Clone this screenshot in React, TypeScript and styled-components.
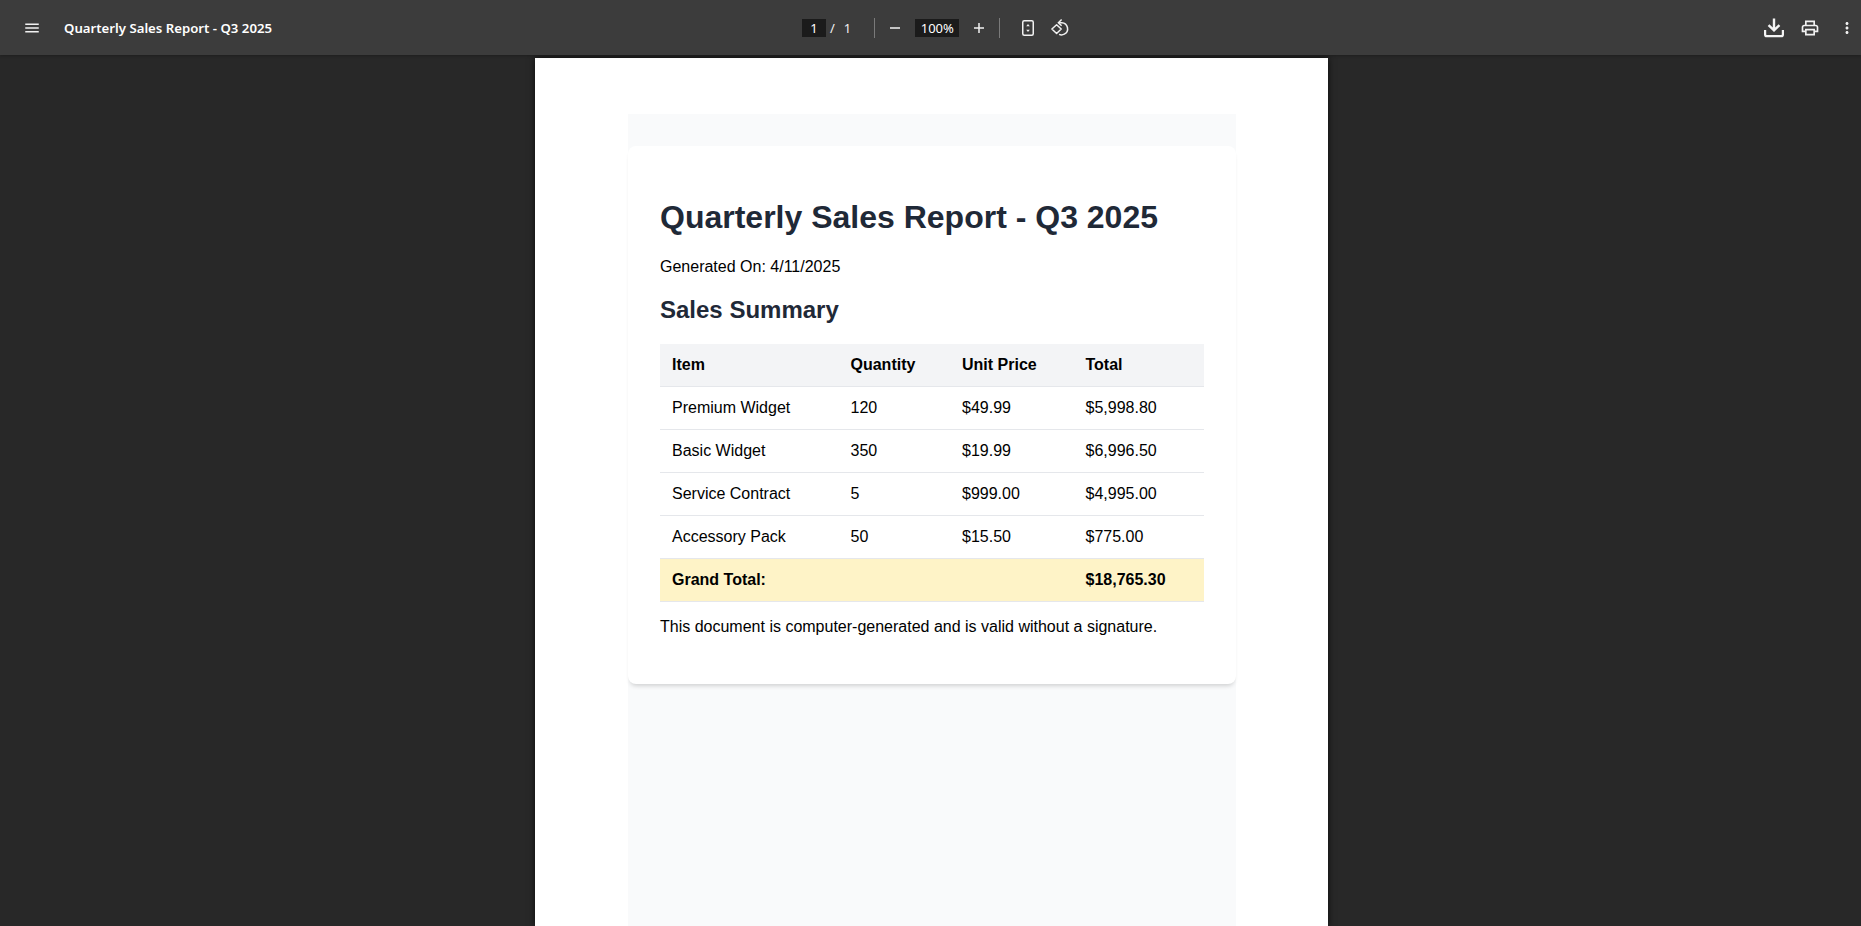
import React from "react";
import styled, { createGlobalStyle } from "styled-components";

const GlobalStyle = createGlobalStyle`
  html, body {
    margin: 0;
    padding: 0;
    height: 100%;
    overflow: hidden;
    background: #282828;
  }
`;

const Viewer = styled.div`
  width: 100%;
  height: 926px;
  display: flex;
  flex-direction: column;
  overflow: hidden;
  background: #282828;
  font-family: "Noto Sans", "Open Sans", sans-serif;
`;

const Toolbar = styled.header`
  flex: none;
  height: 55px;
  display: grid;
  grid-template-columns: 802px auto 1fr;
  align-items: center;
  background: #3c3c3c;
  color: #fff;
  position: relative;
  z-index: 2;
  box-shadow: 0 1px 3px rgba(0, 0, 0, 0.25);
`;

const LeftGroup = styled.div`
  display: flex;
  align-items: center;
  padding-left: 22px;
`;

const CenterGroup = styled.div`
  display: flex;
  align-items: center;
`;

const RightGroup = styled.div`
  display: flex;
  align-items: center;
  justify-content: flex-end;
  padding-right: 5.5px;
`;

const IconSlot = styled.span<{ $w?: number; $ml?: number }>`
  width: ${(p) => p.$w ?? 20}px;
  height: 24px;
  margin-left: ${(p) => p.$ml ?? 0}px;
  display: flex;
  align-items: center;
  justify-content: center;
  flex: none;
`;

const DocTitle = styled.span`
  margin-left: 22px;
  font-size: 13.2px;
  font-weight: 600;
  color: #fff;
  white-space: nowrap;
`;

const NumberBox = styled.span<{ $w: number; $ml?: number }>`
  width: ${(p) => p.$w}px;
  height: 18px;
  margin-left: ${(p) => p.$ml ?? 0}px;
  background: #1b1b1b;
  color: #fff;
  font-size: 13px;
  line-height: 19px;
  text-align: center;
  flex: none;
`;

const PageText = styled.span<{ $ml: number }>`
  margin-left: ${(p) => p.$ml}px;
  font-size: 13px;
  color: #f1f1f1;
`;

const Separator = styled.span<{ $ml: number }>`
  width: 1px;
  height: 20px;
  margin-left: ${(p) => p.$ml}px;
  background: #7a7a7a;
  flex: none;
`;

const Stage = styled.main`
  flex: 1;
  padding-top: 3px;
  min-height: 0;
`;

const Sheet = styled.div`
  width: 793px;
  height: 868px;
  margin: 0 0 0 535px;
  padding: 56px 92px 0 93px;
  box-sizing: border-box;
  background: #fff;
  box-shadow: 0 0 7px rgba(0, 0, 0, 0.75);
`;

const DocBody = styled.div`
  height: 100%;
  padding-top: 32px;
  box-sizing: border-box;
  background: #f9fafb;
  font-family: "Liberation Sans", Arial, sans-serif;
  font-size: 16px;
  color: #000;
`;

const Card = styled.section`
  padding: 32px;
  background: #fff;
  border-radius: 8px;
  box-shadow: 0 4px 4px -2px rgba(0, 0, 0, 0.16);
`;

const Title = styled.h1`
  margin: 21.44px 0;
  font-size: 32px;
  font-weight: 700;
  color: #1f2937;
`;

const Paragraph = styled.p`
  margin: 16px 0;
`;

const Subtitle = styled.h2`
  margin: 19.92px 0;
  font-size: 24px;
  font-weight: 700;
  color: #1f2937;
`;

const Table = styled.table`
  width: 544px;
  table-layout: fixed;
  border-collapse: collapse;
`;

const HeadCell = styled.th`
  padding: 12px;
  background: #f3f4f6;
  border-bottom: 1px solid #e5e7eb;
  font-weight: 700;
  text-align: left;
`;

const Cell = styled.td`
  padding: 12px;
  border-bottom: 1px solid #e5e7eb;
  text-align: left;
`;

const TotalCell = styled(Cell)`
  background: #fef3c7;
  font-weight: 700;
`;

const ItemCol = styled.col`
  width: 178.5px;
`;
const QuantityCol = styled.col`
  width: 111.5px;
`;
const PriceCol = styled.col`
  width: 123.5px;
`;
const TotalCol = styled.col`
  width: 130.5px;
`;

const rows = [
  ["Premium Widget", "120", "$49.99", "$5,998.80"],
  ["Basic Widget", "350", "$19.99", "$6,996.50"],
  ["Service Contract", "5", "$999.00", "$4,995.00"],
  ["Accessory Pack", "50", "$15.50", "$775.00"],
];

function MenuIcon() {
  return (
    <svg width="18" height="18" viewBox="0 0 24 24" fill="#f1f1f1">
      <path d="M3 18h18v-2H3v2zm0-5h18v-2H3v2zm0-7v2h18V6H3z" />
    </svg>
  );
}

function MinusIcon() {
  return (
    <svg width="12" height="12" viewBox="0 0 12 12" fill="#f1f1f1">
      <rect x="1" y="5.25" width="10" height="1.5" />
    </svg>
  );
}

function PlusIcon() {
  return (
    <svg width="12" height="12" viewBox="0 0 12 12" fill="#f1f1f1">
      <path d="M1 5.25h4.25V1h1.5v4.25H11v1.5H6.75V11h-1.5V6.75H1z" />
    </svg>
  );
}

function FitIcon() {
  return (
    <svg width="16" height="20" viewBox="0 0 16 20" fill="none">
      <rect x="2.75" y="2.75" width="10.5" height="14.5" rx="1.5" stroke="#f1f1f1" strokeWidth="1.5" />
      <path d="M8 6l1.8 2.2H6.2zM8 14l-1.8-2.2h3.6z" fill="#f1f1f1" />
    </svg>
  );
}

function RotateIcon() {
  return (
    <svg width="20" height="20" viewBox="0 0 20 20" fill="none" stroke="#f1f1f1" strokeWidth="1.5">
      <path d="M6.6 6.7 1.9 11l4.7 4.5 4.6-4.5z" strokeLinejoin="round" />
      <path d="M8.6 4.7h3.2a6.1 6.1 0 0 1 2.5 11.5 6 6 0 0 1-5.2.2" />
      <path d="M11.6 1.5 8.4 4.7l3.2 3.1" />
    </svg>
  );
}

function DownloadIcon() {
  return (
    <svg width="22" height="22" viewBox="0 0 22 22" fill="#f4f4f4">
      <path d="M9.8 1.5h2.4v9l3.4-3.3L17.3 9 11 15.1 4.7 9l1.7-1.8 3.4 3.3z" />
      <path d="M1 13h2.2v4.2c0 .6.3.9.9.9h13.8c.6 0 .9-.3.9-.9V13H21v4.7c0 1.6-1.1 2.6-2.6 2.6H3.6c-1.5 0-2.6-1-2.6-2.6z" />
    </svg>
  );
}

function PrintIcon() {
  return (
    <svg width="20" height="20" viewBox="0 0 24 24" fill="#f1f1f1">
      <path d="M19 8h-1V3H6v5H5c-1.66 0-3 1.34-3 3v6h4v4h12v-4h4v-6c0-1.66-1.34-3-3-3zM8 5h8v3H8V5zm8 12v2H8v-4h8v2zm2-2v-2H6v2H4v-4c0-.55.45-1 1-1h14c.55 0 1 .45 1 1v4h-2z" />
    </svg>
  );
}

function MoreIcon() {
  return (
    <svg width="18" height="18" viewBox="0 0 24 24" fill="#f1f1f1">
      <path d="M12 8c1.1 0 2-.9 2-2s-.9-2-2-2-2 .9-2 2 .9 2 2 2zm0 2c-1.1 0-2 .9-2 2s.9 2 2 2 2-.9 2-2-.9-2-2-2zm0 6c-1.1 0-2 .9-2 2s.9 2 2 2 2-.9 2-2-.9-2-2-2z" />
    </svg>
  );
}

export default function App() {
  return (
    <Viewer>
      <GlobalStyle />
      <Toolbar>
        <LeftGroup>
          <IconSlot $w={20}>
            <MenuIcon />
          </IconSlot>
          <DocTitle>Quarterly Sales Report - Q3 2025</DocTitle>
        </LeftGroup>
        <CenterGroup>
          <NumberBox $w={24}>1</NumberBox>
          <PageText $ml={4}>/</PageText>
          <PageText $ml={9}>1</PageText>
          <Separator $ml={23} />
          <IconSlot $w={14} $ml={13}>
            <MinusIcon />
          </IconSlot>
          <NumberBox $w={44} $ml={13}>100%</NumberBox>
          <IconSlot $w={14} $ml={13}>
            <PlusIcon />
          </IconSlot>
          <Separator $ml={13} />
          <IconSlot $w={16} $ml={20}>
            <FitIcon />
          </IconSlot>
          <IconSlot $w={20} $ml={14}>
            <RotateIcon />
          </IconSlot>
        </CenterGroup>
        <RightGroup>
          <IconSlot $w={24}>
            <DownloadIcon />
          </IconSlot>
          <IconSlot $w={20} $ml={14.5}>
            <PrintIcon />
          </IconSlot>
          <IconSlot $w={18} $ml={17.5}>
            <MoreIcon />
          </IconSlot>
        </RightGroup>
      </Toolbar>
      <Stage>
        <Sheet>
          <DocBody>
            <Card>
              <Title>Quarterly Sales Report - Q3 2025</Title>
              <Paragraph>Generated On: 4/11/2025</Paragraph>
              <Subtitle>Sales Summary</Subtitle>
              <Table>
                <colgroup>
                  <ItemCol />
                  <QuantityCol />
                  <PriceCol />
                  <TotalCol />
                </colgroup>
                <thead>
                  <tr>
                    <HeadCell>Item</HeadCell>
                    <HeadCell>Quantity</HeadCell>
                    <HeadCell>Unit Price</HeadCell>
                    <HeadCell>Total</HeadCell>
                  </tr>
                </thead>
                <tbody>
                  {rows.map((row) => (
                    <tr key={row[0]}>
                      {row.map((value) => (
                        <Cell key={value}>{value}</Cell>
                      ))}
                    </tr>
                  ))}
                  <tr>
                    <TotalCell colSpan={3}>Grand Total:</TotalCell>
                    <TotalCell>$18,765.30</TotalCell>
                  </tr>
                </tbody>
              </Table>
              <Paragraph>This document is computer-generated and is valid without a signature.</Paragraph>
            </Card>
          </DocBody>
        </Sheet>
      </Stage>
    </Viewer>
  );
}
